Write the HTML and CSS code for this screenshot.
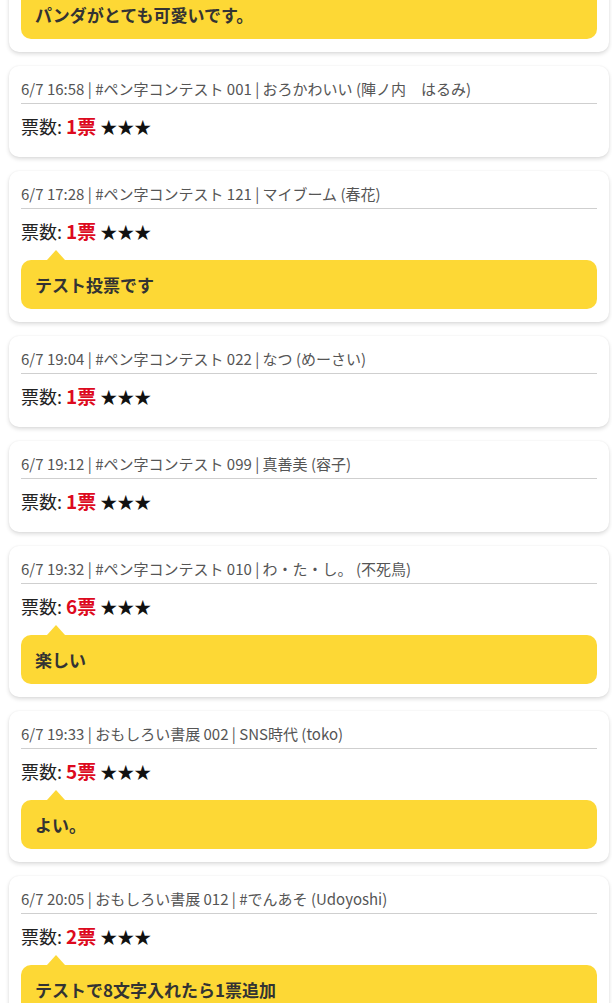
FILE: index.html
```html
<!DOCTYPE html>
<html lang="ja">
<head>
<meta charset="UTF-8" />
<meta name="viewport" content="width=device-width, initial-scale=1" />
<title>投票一覧</title>
<link rel="stylesheet" href="styles.css">
</head>
<body>

<div class="vote-list">

  <div class="vote-card">
    <div class="vote-head">6/7 16:41 | #ペン字コンテスト 015 | パンダ (ぱん)</div>
    <div class="vote-count">票数: <span class="num">1票</span> <span class="stars">★★★</span></div>
    <div class="comment">パンダがとても可愛いです。</div>
  </div>

  <div class="vote-card">
    <div class="vote-head">6/7 16:58 | #ペン字コンテスト 001 | おろかわいい (陣ノ内　はるみ)</div>
    <div class="vote-count">票数: <span class="num">1票</span> <span class="stars">★★★</span></div>
  </div>

  <div class="vote-card">
    <div class="vote-head">6/7 17:28 | #ペン字コンテスト 121 | マイブーム (春花)</div>
    <div class="vote-count">票数: <span class="num">1票</span> <span class="stars">★★★</span></div>
    <div class="comment">テスト投票です</div>
  </div>

  <div class="vote-card">
    <div class="vote-head">6/7 19:04 | #ペン字コンテスト 022 | なつ (めーさい)</div>
    <div class="vote-count">票数: <span class="num">1票</span> <span class="stars">★★★</span></div>
  </div>

  <div class="vote-card">
    <div class="vote-head">6/7 19:12 | #ペン字コンテスト 099 | 真善美 (容子)</div>
    <div class="vote-count">票数: <span class="num">1票</span> <span class="stars">★★★</span></div>
  </div>

  <div class="vote-card">
    <div class="vote-head">6/7 19:32 | #ペン字コンテスト 010 | わ・た・し。 (不死鳥)</div>
    <div class="vote-count">票数: <span class="num">6票</span> <span class="stars">★★★</span></div>
    <div class="comment">楽しい</div>
  </div>

  <div class="vote-card">
    <div class="vote-head">6/7 19:33 | おもしろい書展 002 | SNS時代 (toko)</div>
    <div class="vote-count">票数: <span class="num">5票</span> <span class="stars">★★★</span></div>
    <div class="comment">よい。</div>
  </div>

  <div class="vote-card">
    <div class="vote-head">6/7 20:05 | おもしろい書展 012 | #でんあそ (Udoyoshi)</div>
    <div class="vote-count">票数: <span class="num">2票</span> <span class="stars">★★★</span></div>
    <div class="comment">テストで8文字入れたら1票追加</div>
  </div>

</div>

</body>
</html>
```

FILE: styles.css
```css
:root {
  --yellow: #fdd835;
  --red: #dd0a1e;
  --text: #222;
  --muted: #555;
  --rule: #cfcfcf;
}
*, *::before, *::after {
  box-sizing: border-box;
}
html, body {
  margin: 0; padding: 0;
  background: #fff;
  font-family: "Noto Sans CJK JP", "Noto Sans", sans-serif;
  color: var(--text);
  overflow: hidden;
}

/* list scrolled so the first card is cut off */
.vote-list {
  display: flex;
  flex-direction: column;
  gap: 14px;
  margin-top: -99px;
  padding: 0 3px 0 9px;
}

.vote-card {
  display: flex;
  flex-direction: column;
  background: #fff;
  border-radius: 10px;
  padding: 13px 12px 13px;
  box-shadow: 0 2px 4px rgba(0, 0, 0, 0.14), 0 0 2px rgba(0, 0, 0, 0.06);
}

.vote-head {
  font-size: 15px;
  line-height: 20px;
  color: var(--muted);
  padding-bottom: 4px;
  border-bottom: 1px solid var(--rule);
  white-space: nowrap;
}

.vote-count {
  margin: 9px 0 4px;
  font-size: 18px;
  line-height: 26px;
  color: var(--text);
}
.vote-count .num {
  color: var(--red);
  font-weight: 700;
  font-size: 19px;
}
.vote-count .stars {
  color: #111;
  font-size: 17px;
}

/* comment bubble */
.comment {
  position: relative;
  margin-top: 11px;
  background: var(--yellow);
  border-radius: 10px;
  padding: 12px 14px;
  font-size: 17px;
  line-height: 25px;
  font-weight: 700;
  color: #333;
}
.comment::before {
  content: "";
  position: absolute;
  left: 26px;
  top: -10px;
  border-left: 9px solid transparent;
  border-right: 9px solid transparent;
  border-bottom: 10px solid var(--yellow);
}
```
